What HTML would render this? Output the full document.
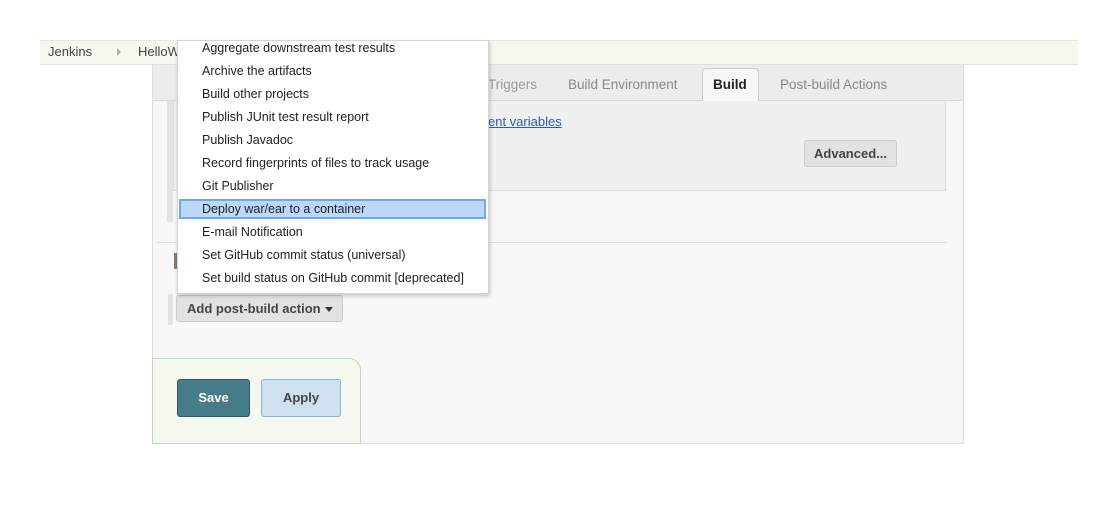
<!DOCTYPE html>
<html><head><meta charset="utf-8"><style>
*{box-sizing:border-box;margin:0;padding:0}
body{width:1114px;height:512px;background:#fff;font-family:"Liberation Sans",sans-serif;position:relative;overflow:hidden}
.a{position:absolute}
</style></head><body>
<div class="a" style="left:40px;top:40px;width:1038px;height:25px;background:#f4f8ee;border-top:1px solid #e4e8df;border-bottom:1px solid #dfe3da"></div>
<div class="a" style="left:48px;top:44px;font-size:13px;color:#444">Jenkins</div>
<div class="a" style="left:117px;top:48px;width:0;height:0;border-left:4px solid #aaa;border-top:4px solid transparent;border-bottom:4px solid transparent"></div>
<div class="a" style="left:138px;top:44px;font-size:13px;color:#444">HelloW</div>

<div class="a" style="left:152px;top:65px;width:812px;height:379px;background:#f7f7f7;border:1px solid #ddd;border-top:none"></div>
<div class="a" style="left:153px;top:65px;width:810px;height:36px;background:#ececec;border-bottom:1px solid #d8d8d8"></div>
<div class="a" style="left:488px;top:77px;font-size:13.5px;color:#999">Triggers</div>
<div class="a" style="left:568px;top:77px;font-size:13.5px;color:#888">Build Environment</div>
<div class="a" style="left:702px;top:68px;width:57px;height:34px;background:#f7f7f7;border:1px solid #ccc;border-bottom:none;border-radius:4px 4px 0 0"></div>
<div class="a" style="left:713px;top:77px;font-size:13.5px;font-weight:bold;color:#222">Build</div>
<div class="a" style="left:780px;top:77px;font-size:13.5px;color:#888">Post-build Actions</div>

<div class="a" style="left:167px;top:101px;width:6px;height:121px;background:#e2e2e2"></div>
<div class="a" style="left:173px;top:101px;width:773px;height:90px;background:#f0f0f0;border:1px solid #ddd;border-top:none"></div>
<div class="a" style="left:488px;top:114px;font-size:13px;color:#2a5db0;text-decoration:underline">ent variables</div>
<div class="a" style="left:804px;top:140px;width:93px;height:27px;background:#e2e2e2;border:1px solid #ccc;border-radius:3px;font-size:13px;font-weight:bold;color:#444;text-align:center;line-height:25px">Advanced...</div>
<div class="a" style="left:157px;top:242px;width:790px;height:1px;background:#ddd"></div>
<div class="a" style="left:174px;top:253px;width:3px;height:16px;background:#8a7a6a"></div>

<div class="a" style="left:168px;top:294px;width:5px;height:31px;background:#e2e2e2"></div>
<div class="a" style="left:176px;top:295px;width:167px;height:27px;background:#e2e2e2;border:1px solid #ccc;border-radius:3px"></div>
<div class="a" style="left:187px;top:301px;font-size:13px;font-weight:bold;color:#444">Add post-build action</div>
<div class="a" style="left:325px;top:307px;width:0;height:0;border-top:5px solid #333;border-left:4px solid transparent;border-right:4px solid transparent"></div>

<div class="a" style="left:152px;top:358px;width:209px;height:86px;background:#f4f8ee;border:1px solid #bcd8c2;border-radius:0 12px 0 0"></div>
<div class="a" style="left:177px;top:379px;width:73px;height:38px;background:#467b8a;border:1px solid #2e5a66;border-radius:3px;color:#fff;font-weight:bold;font-size:13px;text-align:center;line-height:36px">Save</div>
<div class="a" style="left:261px;top:379px;width:80px;height:38px;background:#cfe0ef;border:1px solid #8db3dd;border-radius:3px;color:#444;font-weight:bold;font-size:13px;text-align:center;line-height:36px">Apply</div>

<div class="a" style="left:177px;top:40px;width:312px;height:254px;background:#fff;border:1px solid #d4d4d4;box-shadow:1px 2px 4px rgba(0,0,0,.2)"></div>
<div class="a" style="left:179px;top:199px;width:307px;height:20px;background:#bcd9fb;border:2px solid #70a8ef"></div>
<div class="a" style="left:202px;top:37px;font-size:12.5px;color:#222;line-height:23px">
Aggregate downstream test results<br>Archive the artifacts<br>Build other projects<br>Publish JUnit test result report<br>Publish Javadoc<br>Record fingerprints of files to track usage<br>Git Publisher<br>Deploy war/ear to a container<br>E-mail Notification<br>Set GitHub commit status (universal)<br>Set build status on GitHub commit [deprecated]
</div>
</body></html>
